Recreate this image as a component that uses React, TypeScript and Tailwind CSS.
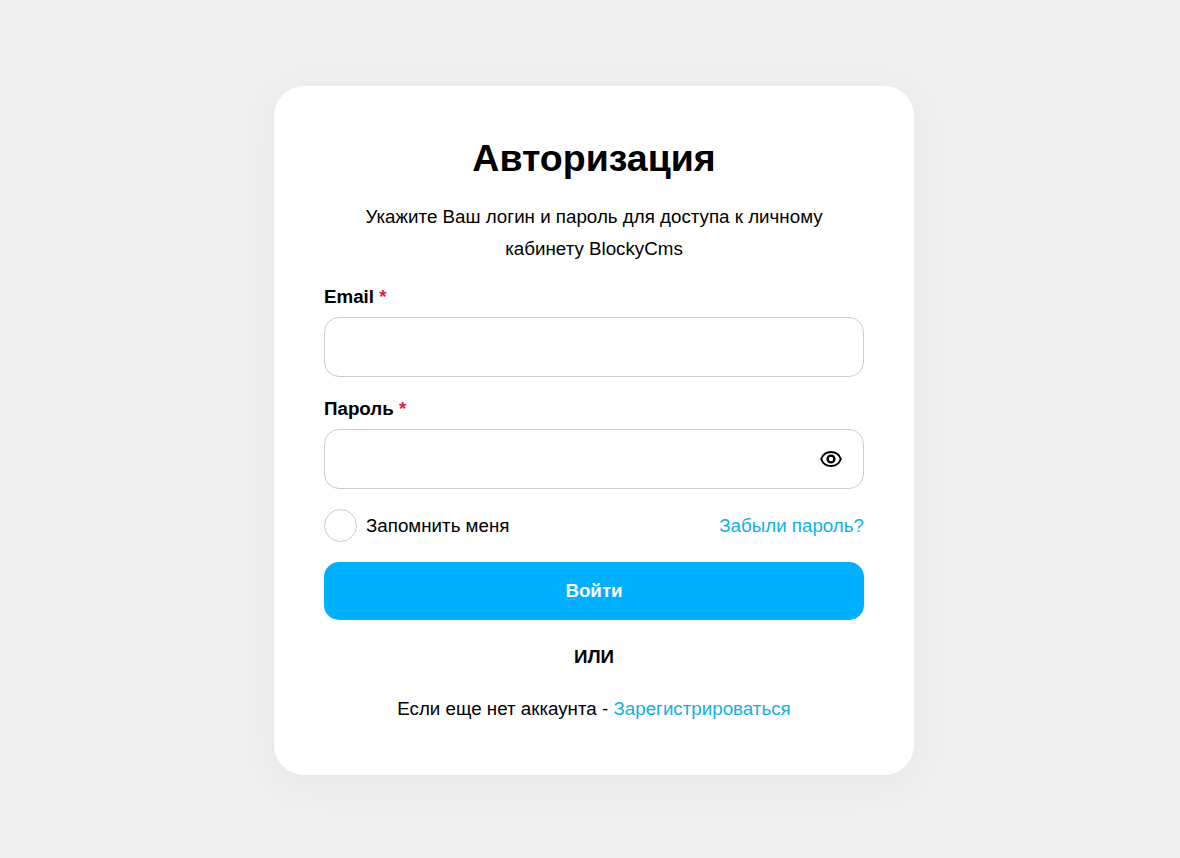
export default function App() {
  return (
    <div className="h-[858px] bg-[#efefef] pt-[86px] pl-[8px] flex justify-center items-start font-['Liberation_Sans',Arial,sans-serif] text-black overflow-hidden">
      <div className="w-[640px] h-[689px] bg-white rounded-[30px] px-[50px] pt-[50px] shadow-[0_8px_40px_rgba(0,0,0,0.04)]">
        <h1 className="text-[37.5px] leading-[44px] font-bold text-center">Авторизация</h1>
        <p className="mt-[21px] text-[18.75px] leading-[32px] text-center px-[20px]">
          Укажите Ваш логин и пароль для доступа к личному кабинету BlockyCms
        </p>
        <label className="block mt-[16px] text-[18.75px] leading-[32px] font-bold">
          Email <span className="text-[#e11d48]">*</span>
        </label>
        <input className="block mt-[4px] w-full h-[60px] border border-[#cccccc] rounded-[15px] bg-white outline-none" />
        <label className="block mt-[16px] text-[18.75px] leading-[32px] font-bold">
          Пароль <span className="text-[#e11d48]">*</span>
        </label>
        <div className="relative mt-[4px]">
          <input className="block w-full h-[60px] border border-[#cccccc] rounded-[15px] bg-white outline-none" />
          <svg className="absolute right-[21px] top-[18px]" width="24" height="24" viewBox="0 0 24 24" fill="none" stroke="#000" strokeWidth="2" strokeLinecap="round" strokeLinejoin="round">
            <path d="M2.2 12C3.8 7.6 7.6 5 12 5S20.2 7.6 21.8 12C20.2 16.4 16.4 19 12 19S3.8 16.4 2.2 12Z" />
            <circle cx="12" cy="12" r="3.4" strokeWidth="2.4" />
          </svg>
        </div>
        <div className="mt-[20px] flex items-center justify-between h-[33px]">
          <label className="flex items-center gap-[9px] text-[18.75px]">
            <span className="block w-[33px] h-[33px] rounded-full border border-[#cccccc] bg-white" />
            <span className="pt-[2px]">Запомнить меня</span>
          </label>
          <a className="text-[18.75px] text-[#0fb1e3] pt-[2px]">Забыли пароль?</a>
        </div>
        <button className="mt-[20px] block w-full h-[58px] rounded-[15px] bg-[#00b0ff] text-white text-[18.75px] font-bold">Войти</button>
        <div className="mt-[21px] text-center text-[18.75px] leading-[32px] font-bold">ИЛИ</div>
        <p className="mt-[20px] text-center text-[18.75px] leading-[32px]">
          Если еще нет аккаунта - <a className="text-[#0fb1e3]">Зарегистрироваться</a>
        </p>
      </div>
    </div>
  );
}
